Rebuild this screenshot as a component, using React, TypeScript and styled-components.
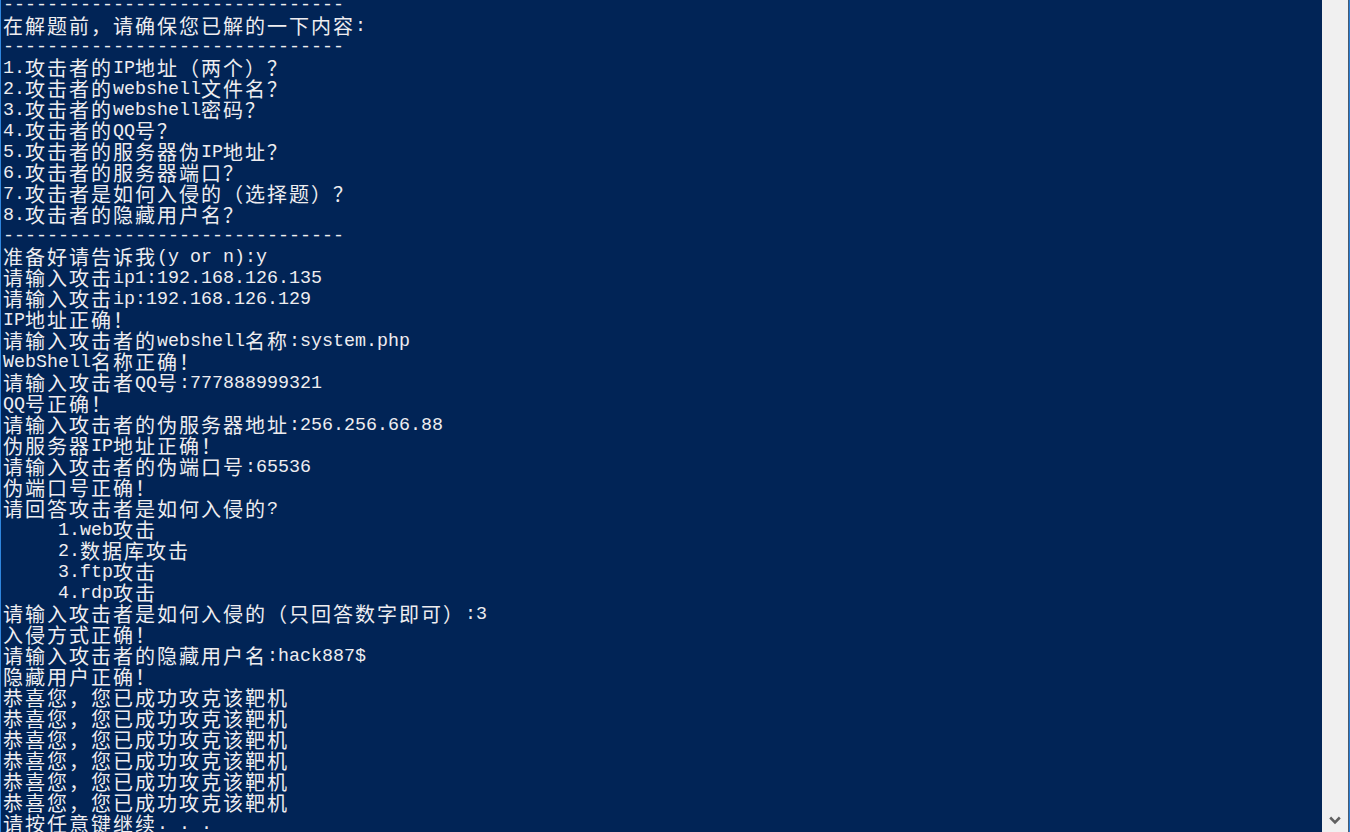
import React from "react";
import styled, { createGlobalStyle } from "styled-components";

const GlobalStyle = createGlobalStyle`
  html, body {
    margin: 0;
    padding: 0;
    background: #012456;
    overflow: hidden;
  }
`;

const Window = styled.div`
  display: flex;
  flex-direction: row;
  width: 1350px;
  height: 832px;
  overflow: hidden;
  background: #012456;
`;

const LeftEdge = styled.div`
  flex: 0 0 1px;
  background: #2f86de;
`;

const Console = styled.div`
  flex: 1 1 auto;
  min-width: 0;
  overflow: hidden;
  padding-left: 2px;
  color: #eeedf0;
`;

const Lines = styled.div`
  display: flex;
  flex-direction: column;
  margin-top: -6px;
`;

const Line = styled.div`
  height: 21px;
  line-height: 21px;
  white-space: pre;
  display: flex;
  align-items: center;
`;

const Wide = styled.span`
  font-family: "Noto Sans CJK SC", "Noto Sans CJK JP", sans-serif;
  font-size: 20px;
  letter-spacing: 2px;
  line-height: 21px;
`;

const Narrow = styled.span`
  font-family: "Liberation Mono", "DejaVu Sans Mono", monospace;
  font-size: 18.333px;
  line-height: 21px;
  padding-top: 2px;
`;

const Scrollbar = styled.div`
  flex: 0 0 26px;
  background: #f0f0f0;
  display: flex;
  flex-direction: column;
  justify-content: flex-end;
  align-items: center;
  padding-bottom: 7px;
  box-sizing: border-box;
`;

const ArrowIcon = styled.svg`
  display: block;
  width: 12px;
  height: 9px;
  margin-left: -1px;
`;

const RightEdge = styled.div`
  flex: 0 0 2px;
  border-left: 1px solid #4a5a6e;
  background: #2a7fd6;
  box-sizing: border-box;
`;

const DASH = "-------------------------------";

const LINES: string[] = [
  DASH,
  "在解题前，请确保您已解的一下内容:",
  DASH,
  "1.攻击者的IP地址（两个）？",
  "2.攻击者的webshell文件名？",
  "3.攻击者的webshell密码？",
  "4.攻击者的QQ号？",
  "5.攻击者的服务器伪IP地址？",
  "6.攻击者的服务器端口？",
  "7.攻击者是如何入侵的（选择题）？",
  "8.攻击者的隐藏用户名？",
  DASH,
  "准备好请告诉我(y or n):y",
  "请输入攻击ip1:192.168.126.135",
  "请输入攻击ip:192.168.126.129",
  "IP地址正确！",
  "请输入攻击者的webshell名称:system.php",
  "WebShell名称正确！",
  "请输入攻击者QQ号:777888999321",
  "QQ号正确！",
  "请输入攻击者的伪服务器地址:256.256.66.88",
  "伪服务器IP地址正确！",
  "请输入攻击者的伪端口号:65536",
  "伪端口号正确！",
  "请回答攻击者是如何入侵的?",
  "     1.web攻击",
  "     2.数据库攻击",
  "     3.ftp攻击",
  "     4.rdp攻击",
  "请输入攻击者是如何入侵的（只回答数字即可）:3",
  "入侵方式正确！",
  "请输入攻击者的隐藏用户名:hack887$",
  "隐藏用户正确！",
  "恭喜您，您已成功攻克该靶机",
  "恭喜您，您已成功攻克该靶机",
  "恭喜您，您已成功攻克该靶机",
  "恭喜您，您已成功攻克该靶机",
  "恭喜您，您已成功攻克该靶机",
  "恭喜您，您已成功攻克该靶机",
  "请按任意键继续. . .",
];

const isWide = (ch: string) => {
  const c = ch.codePointAt(0) || 0;
  return c >= 0x2e80;
};

type Run = { wide: boolean; text: string };

const splitRuns = (s: string): Run[] => {
  const runs: Run[] = [];
  for (const ch of Array.from(s)) {
    const w = isWide(ch);
    const last = runs[runs.length - 1];
    if (last && last.wide === w) last.text += ch;
    else runs.push({ wide: w, text: ch });
  }
  return runs;
};

const ConsoleLine: React.FC<{ text: string }> = ({ text }) => (
  <Line>
    {splitRuns(text).map((r, i) =>
      r.wide ? <Wide key={i}>{r.text}</Wide> : <Narrow key={i}>{r.text}</Narrow>
    )}
  </Line>
);

export default function App() {
  return (
    <>
      <GlobalStyle />
      <Window>
        <LeftEdge />
        <Console>
          <Lines>
            {LINES.map((l, i) => (
              <ConsoleLine key={i} text={l} />
            ))}
          </Lines>
        </Console>
        <Scrollbar>
          <ArrowIcon viewBox="0 0 12 9">
            <polyline
              points="1.2,1.5 6,6.3 10.8,1.5"
              fill="none"
              stroke="#606060"
              strokeWidth="2.6"
            />
          </ArrowIcon>
        </Scrollbar>
        <RightEdge />
      </Window>
    </>
  );
}
